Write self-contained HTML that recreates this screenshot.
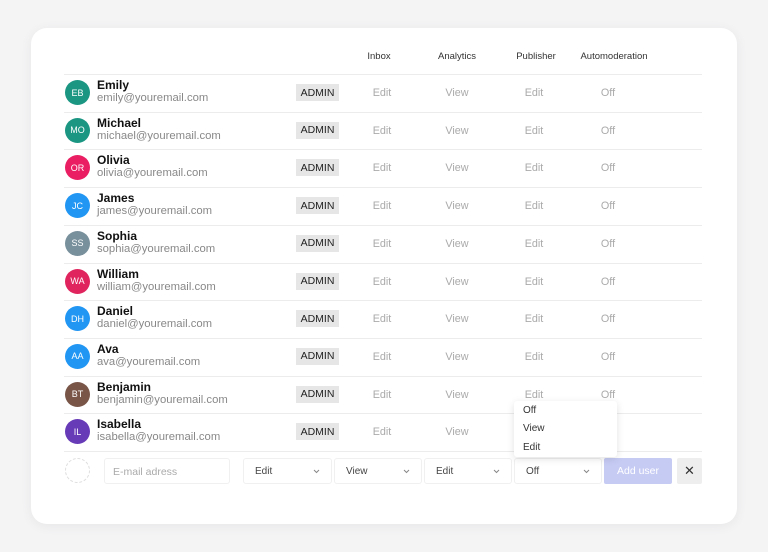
<!DOCTYPE html><html><head><style>
*{margin:0;padding:0;box-sizing:border-box}
body{width:768px;height:552px;background:#f4f4f5;font-family:"Liberation Sans",sans-serif;position:relative;overflow:hidden}
.card{position:absolute;left:31px;top:28px;width:706px;height:496px;background:#fff;border-radius:16px;box-shadow:0 2px 12px rgba(0,0,0,.06)}
.a{position:absolute}
.h{font-size:9.5px;color:#333;top:51px;transform:translateX(-50%)}
.line{position:absolute;left:64px;width:638px;height:1px;background:#ececec}
.av{position:absolute;left:65px;width:25px;height:25px;border-radius:50%;color:#fff;font-size:9px;display:flex;align-items:center;justify-content:center}
.nm{position:absolute;left:97px;font-size:12px;font-weight:bold;color:#111}
.em{position:absolute;left:97px;font-size:11.3px;color:#888}
.bd{position:absolute;left:296px;width:43px;height:17px;background:#e6e6e6;font-size:10.5px;color:#222;display:flex;align-items:center;justify-content:center}
.c{position:absolute;font-size:10.8px;color:#aaa;transform:translateX(-50%)}
.sel{position:absolute;top:458px;height:26px;border:1px solid #f0f0f0;border-radius:3px;font-size:10px;color:#444;padding:7px 11px}
.sel svg{position:absolute;right:11px;top:10px}
</style></head><body>
<div class="card"></div>
<div class="a h" style="left:379px">Inbox</div>
<div class="a h" style="left:457px">Analytics</div>
<div class="a h" style="left:536px">Publisher</div>
<div class="a h" style="left:614px">Automoderation</div>
<div id="rows"></div>
<script>
var d=[["EB","Emily","#1a9683"],["MO","Michael","#1a9683"],["OR","Olivia","#e91e63"],["JC","James","#2196f3"],["SS","Sophia","#78909c"],["WA","William","#e0245e"],["DH","Daniel","#2196f3"],["AA","Ava","#2196f3"],["BT","Benjamin","#795548"],["IL","Isabella","#673ab7"]];
var h='';
for(var i=0;i<d.length;i++){var t=74+i*37.7;
h+='<div class="line" style="top:'+t+'px"></div>';
h+='<div class="av" style="top:'+(t+6)+'px;background:'+d[i][2]+'">'+d[i][0]+'</div>';
h+='<div class="nm" style="top:'+(t+4)+'px">'+d[i][1]+'</div>';
h+='<div class="em" style="top:'+(t+18)+'px">'+d[i][1].toLowerCase()+'@youremail.com</div>';
h+='<div class="bd" style="top:'+(t+10)+'px">ADMIN</div>';
h+='<div class="c" style="left:382px;top:'+(t+13)+'px">Edit</div>';
h+='<div class="c" style="left:457px;top:'+(t+13)+'px">View</div>';
if(i<9){h+='<div class="c" style="left:534px;top:'+(t+13)+'px">Edit</div>';
h+='<div class="c" style="left:608px;top:'+(t+13)+'px">Off</div>';}
}
h+='<div class="line" style="top:451px"></div>';
document.getElementById('rows').innerHTML=h;
var chev='<svg width="7" height="5" viewBox="0 0 7 5"><path d="M1 1l2.5 2.5L6 1" fill="none" stroke="#888" stroke-width="1"/></svg>';
</script>
<div class="a" style="left:65px;top:458px;width:25px;height:25px;border-radius:50%;border:1px dashed #ddd"></div>
<div class="a" style="left:104px;top:458px;width:126px;height:26px;border:1px solid #f0f0f0;border-radius:3px;font-size:10.5px;color:#aaa;padding:7px 8px">E-mail adress</div>
<div class="sel" style="left:243px;width:89px">Edit<svg width="7" height="5" viewBox="0 0 7 5"><path d="M1 1l2.5 2.5L6 1" fill="none" stroke="#888"/></svg></div>
<div class="sel" style="left:334px;width:88px">View<svg width="7" height="5" viewBox="0 0 7 5"><path d="M1 1l2.5 2.5L6 1" fill="none" stroke="#888"/></svg></div>
<div class="sel" style="left:424px;width:88px">Edit<svg width="7" height="5" viewBox="0 0 7 5"><path d="M1 1l2.5 2.5L6 1" fill="none" stroke="#888"/></svg></div>
<div class="sel" style="left:514px;width:88px">Off<svg width="7" height="5" viewBox="0 0 7 5"><path d="M1 1l2.5 2.5L6 1" fill="none" stroke="#888"/></svg></div>
<div class="a" style="left:604px;top:458px;width:68px;height:26px;background:#c6cbf4;border-radius:2px;color:#fff;font-size:10.5px;display:flex;align-items:center;justify-content:center">Add user</div>
<div class="a" style="left:677px;top:458px;width:25px;height:26px;background:#eeeeee;border-radius:2px;color:#333;font-size:13px;display:flex;align-items:center;justify-content:center">✕</div>
<div class="a" style="left:514px;top:401px;width:103px;height:56px;background:#fff;border-radius:3px;box-shadow:0 2px 8px rgba(0,0,0,.12);font-size:10px;color:#333">
<div class="a" style="left:9px;top:4px">Off</div>
<div class="a" style="left:9px;top:22px">View</div>
<div class="a" style="left:9px;top:41px">Edit</div>
</div>
</body></html>
